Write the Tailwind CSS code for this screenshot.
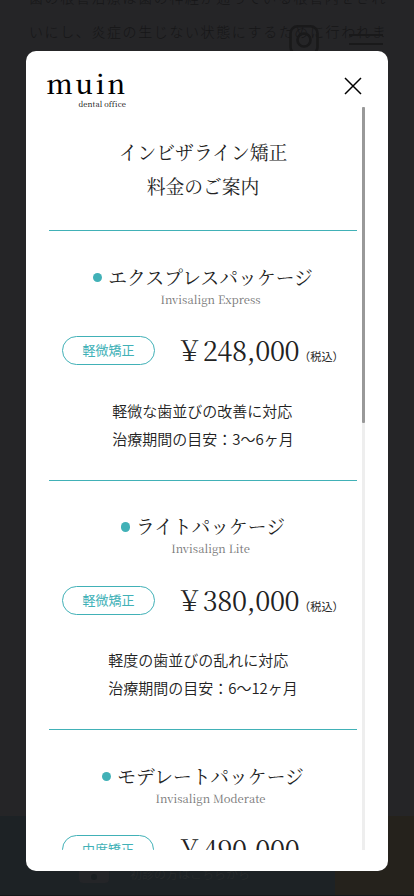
<!DOCTYPE html>
<html lang="ja">
<head>
<meta charset="utf-8">
<meta name="viewport" content="width=device-width, initial-scale=1">
<title>muin dental office</title>
<script src="https://cdn.jsdelivr.net/npm/@tailwindcss/browser@4"></script>
</head>
<body class="relative h-[896px] w-[414px] overflow-hidden bg-[#252527] font-['Noto_Sans_CJK_JP',sans-serif] text-[#222]">
  <!-- Dimmed page -->
  <div class="absolute inset-0 flex flex-col justify-between overflow-hidden">
    <p class="-mt-[20px] ml-[29px] whitespace-nowrap text-[14px] font-light leading-[34px] tracking-[1.6px] text-[#161617]">歯の根管治療は歯の神経が通っている根管内をきれ<br>いにし、炎症の生じない状態にするために行われま</p>
    <div class="flex h-20 border-b border-[#151719]">
      <div class="flex w-[335px] items-start bg-[#1d2225] pl-[79px] pt-[39px]">
        <svg class="shrink-0" width="30" height="28" viewBox="0 0 30 28"><path d="M0 0H30V24Q30 28 26 28H4Q0 28 0 24Z" fill="#242528"/><circle cx="15" cy="22" r="3" fill="#1a1e21"/></svg>
        <span class="ml-[21px] mt-[7px] text-[12px] font-light leading-[24px] text-[#2b2d2e]">初診の方はこちらから</span>
      </div>
      <div class="flex-1 bg-[#25221c]"></div>
    </div>
  </div>
  <svg class="absolute left-[288px] top-[23px]" width="100" height="32" viewBox="0 0 100 32" fill="none" stroke="#19191a" stroke-width="2.6">
    <rect x="2.5" y="3.3" width="27" height="28" rx="7"/><circle cx="16" cy="17" r="6.5"/>
    <path d="M61 12H95M61 21H95" stroke-width="2"/>
  </svg>

  <!-- Modal -->
  <div class="absolute left-[26px] top-[51px] flex h-[820px] w-[362px] flex-col rounded-[10px] bg-white">
    <header class="flex h-[56px] shrink-0 justify-between pl-[20px] pr-[26px]">
      <div class="flex w-[80px] flex-col items-end whitespace-nowrap font-['Noto_Serif_CJK_JP','Liberation_Serif',serif] text-black">
        <span class="mt-[16px] -mr-[2px] h-[32px] text-[27px] font-medium leading-[32px] tracking-[2.6px]">muin</span>
        <span class="text-[7.5px] leading-[10px] tracking-[0.1px]">dental office</span>
      </div>
      <svg class="mt-[26px]" width="18" height="18" viewBox="0 0 18 18" stroke="#000" stroke-width="1.5"><path d="M1 1L17 17M17 1L1 17"/></svg>
    </header>
    <div class="flex h-[743px] justify-between overflow-hidden pl-[23px] pr-[23px]">
      <main class="w-[308px] text-center">
        <h1 class="h-[123px] pt-[28px] font-['Noto_Serif_CJK_JP','Liberation_Serif',serif] text-[18.8px] leading-[34px]">インビザライン矯正<br>料金のご案内</h1>

        <section class="h-[250px] border-t border-[#41b1b7]">
          <div class="flex items-start justify-center pt-[32px] font-['Noto_Serif_CJK_JP','Liberation_Serif',serif]">
            <i class="mr-[6px] mt-[10px] size-[9px] rounded-full bg-[#41b1b7]"></i>
            <div><h2 class="text-[18.8px] leading-[28px]">エクスプレスパッケージ</h2><p class="text-[11.3px] leading-[17px] text-[#777]">Invisalign Express</p></div>
          </div>
          <div class="mt-[28px] flex h-[29px] items-center pl-[13px]">
            <span class="h-[29px] w-[93px] rounded-full border border-[#41b1b7] text-[13px] leading-[25px] text-[#41b1b7]">軽微矯正</span>
            <span class="-mt-[2px] ml-[21px] w-[123px] whitespace-nowrap text-left font-['Noto_Serif_CJK_JP','Liberation_Serif',serif] text-[27px] leading-[30px] tracking-[-0.35px]">￥248,000</span>
            <span class="-mb-[10px] whitespace-nowrap text-[11.2px] leading-4">（税込）</span>
          </div>
          <p class="mt-[32px] inline-block text-left text-[15px] font-[350] leading-[28px]">軽微な歯並びの改善に対応<br>治療期間の目安：3〜6ヶ月</p>
        </section>

        <section class="h-[249px] border-t border-[#41b1b7]">
          <div class="flex items-start justify-center pt-[31px] font-['Noto_Serif_CJK_JP','Liberation_Serif',serif]">
            <i class="mr-[6px] mt-[10px] h-[10px] w-[9px] rounded-full bg-[#41b1b7]"></i>
            <div><h2 class="text-[18.8px] leading-[28px]">ライトパッケージ</h2><p class="text-[11.3px] leading-[17px] text-[#777]">Invisalign Lite</p></div>
          </div>
          <div class="mt-[29px] flex h-[29px] items-center pl-[13px]">
            <span class="h-[29px] w-[93px] rounded-full border border-[#41b1b7] text-[13px] leading-[25px] text-[#41b1b7]">軽微矯正</span>
            <span class="-mt-[2px] ml-[21px] w-[123px] whitespace-nowrap text-left font-['Noto_Serif_CJK_JP','Liberation_Serif',serif] text-[27px] leading-[30px] tracking-[-0.35px]">￥380,000</span>
            <span class="-mb-[10px] whitespace-nowrap text-[11.2px] leading-4">（税込）</span>
          </div>
          <p class="mt-[31px] inline-block text-left text-[15px] font-[350] leading-[28px]">軽度の歯並びの乱れに対応<br>治療期間の目安：6〜12ヶ月</p>
        </section>

        <section class="h-[250px] border-t border-[#41b1b7]">
          <div class="flex items-start justify-center pt-[32px] font-['Noto_Serif_CJK_JP','Liberation_Serif',serif]">
            <i class="mr-[6px] mt-[10px] size-[9px] rounded-full bg-[#41b1b7]"></i>
            <div><h2 class="text-[18.8px] leading-[28px]">モデレートパッケージ</h2><p class="text-[11.3px] leading-[17px] text-[#777]">Invisalign Moderate</p></div>
          </div>
          <div class="mt-[28px] flex h-[29px] items-center pl-[13px]">
            <span class="h-[29px] w-[92px] rounded-full border border-[#41b1b7] text-[13px] leading-[25px] text-[#41b1b7]">中度矯正</span>
            <span class="-mt-[2px] ml-[22px] w-[123px] whitespace-nowrap text-left font-['Noto_Serif_CJK_JP','Liberation_Serif',serif] text-[27px] leading-[30px] tracking-[-0.35px]">￥490,000</span>
            <span class="-mb-[10px] whitespace-nowrap text-[11.2px] leading-4">（税込）</span>
          </div>
        </section>
      </main>
      <div class="h-[743px] w-[3px] bg-[#eee]"><div class="h-[316px] rounded-[1px] bg-[#999]"></div></div>
    </div>
  </div>
</body>
</html>
